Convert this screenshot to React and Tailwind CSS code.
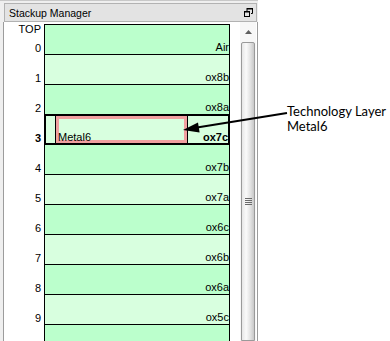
import React from "react";

const rows = [
  { n: "0", label: "Air" },
  { n: "1", label: "ox8b" },
  { n: "2", label: "ox8a" },
  { n: "3", label: "ox7c", selected: true },
  { n: "4", label: "ox7b" },
  { n: "5", label: "ox7a" },
  { n: "6", label: "ox6c" },
  { n: "7", label: "ox6b" },
  { n: "8", label: "ox6a" },
  { n: "9", label: "ox5c" },
  { n: "10", label: "" },
];

function RestoreIcon() {
  return (
    <svg width="9" height="9" viewBox="0 0 9 9" className="block">
      <path d="M3 0.5 H8.5 V5.5 H7" fill="none" stroke="#000" strokeWidth="1" />
      <path d="M3 0 H9 V1.5 H3 Z" fill="#000" />
      <path d="M3 0 V3" stroke="#000" strokeWidth="1" />
      <rect x="0.5" y="3.5" width="5" height="5" fill="none" stroke="#000" strokeWidth="1" />
      <rect x="0" y="3" width="6" height="1.5" fill="#000" />
    </svg>
  );
}

function Row({ r, i }) {
  const dark = i % 2 === 0;
  const bg = dark ? "bg-[#bbffcc]" : "bg-[#d8ffdf]";
  if (r.selected) {
    return (
      <div className="-mt-[1px] -mx-[1px] h-[31px] shrink-0 border-2 border-black flex bg-[#d8ffdf]">
        <div className="w-[9px] shrink-0" />
        <div className="w-[132px] shrink-0 border-l border-black flex items-end shadow-[inset_0_0_0_3px_#f0a0a0]">
          <span className="pl-[2px] leading-[12px]">Metal6</span>
        </div>
        <div className="flex-1 border-l border-black flex items-end justify-end">
          <span className="font-bold leading-[12px]">{r.label}</span>
        </div>
      </div>
    );
  }
  return (
    <div className={`h-[30px] shrink-0 border-b border-black flex items-end justify-end ${bg}`}>
      <span className="leading-[13px]">{r.label}</span>
    </div>
  );
}

export default function App() {
  return (
    <div
      className="relative w-[390px] h-[341px] overflow-hidden bg-white flex text-[11px] text-black"
      style={{ fontFamily: '"Liberation Sans", Arial, sans-serif' }}
    >
      {/* Panel */}
      <div className="w-[258px] h-[341px] shrink-0 bg-[#efefef] border-t border-[#c8c8c8] flex flex-col pl-[3px]">
        <div className="mt-[2px] ml-[1px] mr-[1px] h-[19px] shrink-0 border border-[#b2b2b2] bg-[#e3e3e3] flex items-center justify-between pl-[4px] pr-[3px]">
          <span className="text-[10.5px] leading-[13px] pt-[1px]">Stackup Manager</span>
          <RestoreIcon />
        </div>
        <div className="flex-1 min-h-0 border-l border-r border-[#9c9c9c] bg-white flex overflow-hidden">
          {/* number column */}
          <div className="w-[40px] shrink-0 flex flex-col text-right pr-[3px]">
            <div className="h-[33px] shrink-0 flex flex-col justify-between">
              <span className="leading-[12px] pt-[1px]">TOP</span>
              <span className="leading-[13px]">0</span>
            </div>
            {rows.slice(1, 10).map((r) => (
              <div key={r.n} className="h-[30px] shrink-0 flex items-end justify-end">
                <span className={`leading-[13px] ${r.selected ? "font-bold" : ""}`}>{r.n}</span>
              </div>
            ))}
          </div>
          {/* table */}
          <div className="w-[186px] shrink-0 mt-[2px] border-l border-r border-t border-black flex flex-col self-start">
            {rows.map((r, i) => (
              <Row key={r.n} r={r} i={i} />
            ))}
          </div>
          <div className="w-[10px] shrink-0" />
          {/* scrollbar */}
          <div className="w-[16px] shrink-0 bg-[#f7f7f7] flex flex-col items-stretch">
            <div className="h-[20px] shrink-0 flex items-center justify-center">
              <svg width="7" height="4" viewBox="0 0 7 4">
                <path d="M0 4 L3.5 0 L7 4 Z" fill="#5f5f5f" />
              </svg>
            </div>
            <div className="flex-1 mx-[1px] border border-[#9a9a9a] rounded-t-[2px] bg-[linear-gradient(to_right,#e6e6e6,#fafafa_35%,#e2e2e2_70%,#c8c8c8)] flex flex-col items-center">
              <div className="mt-[155px] flex flex-col gap-[1px]">
                <div className="w-[7px] h-[1px] bg-[#6a6a6a]" />
                <div className="w-[7px] h-[1px] bg-[#6a6a6a]" />
                <div className="w-[7px] h-[1px] bg-[#6a6a6a]" />
                <div className="w-[7px] h-[1px] bg-[#6a6a6a]" />
              </div>
            </div>
          </div>
        </div>
      </div>

      {/* annotation */}
      <svg className="absolute left-0 top-0 pointer-events-none" width="390" height="341">
        <line x1="197" y1="127.6" x2="287" y2="113" stroke="#000" strokeWidth="2" />
        <polygon points="183,130 199.6,132.6 198,122.4" fill="#000" />
      </svg>
      <div
        className="absolute left-[287px] top-[104px] text-[13px] leading-[15px] text-black"
        style={{ fontFamily: 'Lato, "Open Sans", sans-serif' }}
      >
        <div>Technology Layer</div>
        <div>Metal6</div>
      </div>
    </div>
  );
}
